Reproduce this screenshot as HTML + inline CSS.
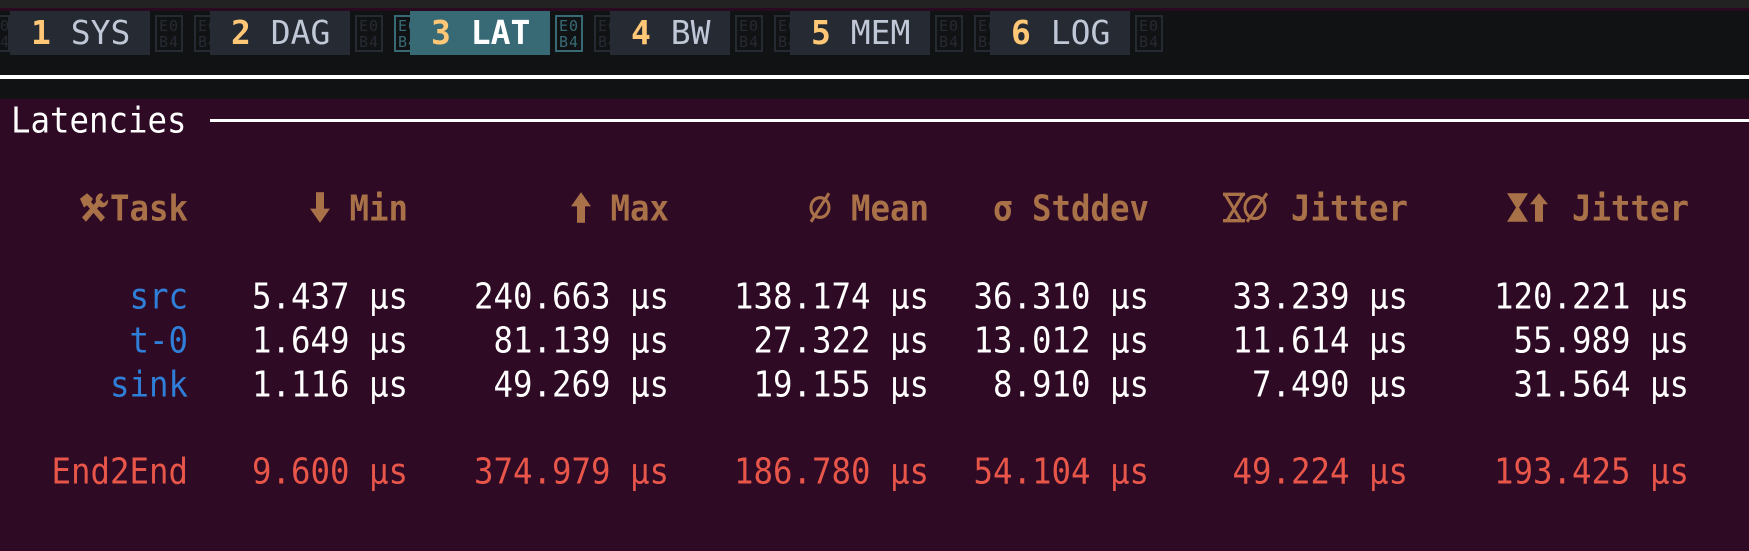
<!DOCTYPE html>
<html><head><meta charset="utf-8"><style>
*{margin:0;padding:0;box-sizing:border-box}
body{width:1749px;height:551px;overflow:hidden;background:#2e0a24;position:relative;font-family:"DejaVu Sans Mono","Liberation Mono",monospace}
.abs{position:absolute}
.tabs{top:0;left:0;width:1749px;height:99px;background:#111214}
.topbar{top:0;left:0;width:1749px;height:8px;background:#222222}
.pl{top:8px;left:0;width:1749px;height:3px;background:#2a0a20}
.tab{position:absolute;top:11px;height:44px;background:#262a33;color:#c0c8d8;font-size:33px;line-height:44px;white-space:pre;padding-left:21px}
.tab b{color:#ffc776}
.tab.act{background:#386a75;color:#fff;font-weight:bold}
.box{position:absolute;top:15px;width:28px;height:37px;border:2px solid #262a33;color:#262a33;font-size:15px;line-height:16px;padding-left:2px;padding-top:1px;letter-spacing:1px;overflow:hidden;white-space:pre}
.box.t{border-color:#386a75;color:#386a75}
.row{position:absolute;left:0;width:1749px;height:40px;font-size:32.4px;line-height:1;transform:scaleY(1.1);transform-origin:top;white-space:pre}
.c{position:absolute;top:0}
.h{color:#a87148;font-weight:bold}
.w{color:#ffffff}.bl{color:#2f7fd8}.r{color:#e8564a}
svg{vertical-align:-2px}
</style></head><body>
<div class="abs tabs"></div>
<div class="abs topbar"></div>
<div class="abs pl"></div>
<div class="abs" style="top:75px;left:0;width:1749px;height:4px;background:#fff"></div>

<div class="box" style="left:-14px;width:24px">E0<br>B4</div>
<div class="tab" style="left:10px;width:140px"><b>1</b> SYS</div>
<div class="box" style="left:155px">E0<br>B4</div>
<div class="box" style="left:194px;width:20px">E0<br>B4</div>
<div class="tab" style="left:210px;width:140px"><b>2</b> DAG</div>
<div class="box" style="left:355px">E0<br>B4</div>
<div class="box t" style="left:394px;width:20px">E0<br>B4</div>
<div class="tab act" style="left:410px;width:140px"><b>3</b> LAT</div>
<div class="box t" style="left:555px">E0<br>B4</div>
<div class="box" style="left:594px;width:20px">E0<br>B4</div>
<div class="tab" style="left:610px;width:120px"><b>4</b> BW</div>
<div class="box" style="left:735px">E0<br>B4</div>
<div class="box" style="left:774px;width:20px">E0<br>B4</div>
<div class="tab" style="left:790px;width:140px"><b>5</b> MEM</div>
<div class="box" style="left:935px">E0<br>B4</div>
<div class="box" style="left:974px;width:20px">E0<br>B4</div>
<div class="tab" style="left:990px;width:140px"><b>6</b> LOG</div>
<div class="box" style="left:1135px">E0<br>B4</div>

<div class="row w" style="top:103px"><span class="c" style="left:11px">Latencies</span></div>
<div class="abs" style="top:119px;left:210px;width:1539px;height:3px;background:#fff"></div>

<div class="row h" style="top:191px">
<span class="c" style="right:1561px"><svg width="32" height="28" viewBox="0 0 32 28"><g fill="#a87148"><path d="M2 6 L9 1 L15 6 L13 9 L27 23 L23 27 L9 12 L6 14 Z"/><path d="M24 1 a6 6 0 0 0 -6 8 L4 23 L8 27 L21 13 a6 6 0 0 0 9 -6 L26 10 L22 7 L25 3 Z"/></g></svg>Task</span>
<span class="c" style="right:1341px"><svg width="20" height="28" viewBox="0 0 20 28"><path fill="#a87148" d="M6 0 H14 V15 H20 L10 28 L0 15 H6 Z"/></svg> Min</span>
<span class="c" style="right:1080px"><svg width="20" height="28" viewBox="0 0 20 28"><path fill="#a87148" d="M6 28 H14 V13 H20 L10 0 L0 13 H6 Z"/></svg> Max</span>
<span class="c" style="right:820px"><svg width="22" height="28" viewBox="0 0 22 28"><g fill="none" stroke="#a87148" stroke-width="3"><circle cx="11" cy="14" r="9"/><path d="M2 27 L20 1"/></g></svg> Mean</span>
<span class="c" style="right:600px">σ Stddev</span>
<span class="c" style="right:341px"><svg width="50" height="28" viewBox="0 0 50 28"><g fill="none" stroke="#a87148" stroke-width="3"><path d="M2 2 H24 M2 26 H24 M4 2 L20 26 M22 2 L6 26"/><circle cx="34" cy="14" r="10"/><path d="M26 27 L46 1"/></g></svg> Jitter</span>
<span class="c" style="right:60px"><svg width="46" height="28" viewBox="0 0 46 28"><g fill="#a87148"><path d="M1 1 H22 L13 14 L22 27 H1 L10 14 Z"/><path d="M33 1 L42 11 H37 V27 H29 V11 H24 Z"/></g></svg> Jitter</span>
</div>

<div class="row w" style="top:279px"><span class="c bl" style="right:1561px">src</span><span class="c" style="right:1341px">5.437 μs</span><span class="c" style="right:1080px">240.663 μs</span><span class="c" style="right:820px">138.174 μs</span><span class="c" style="right:600px">36.310 μs</span><span class="c" style="right:341px">33.239 μs</span><span class="c" style="right:60px">120.221 μs</span></div>
<div class="row w" style="top:323px"><span class="c bl" style="right:1561px">t-0</span><span class="c" style="right:1341px">1.649 μs</span><span class="c" style="right:1080px">81.139 μs</span><span class="c" style="right:820px">27.322 μs</span><span class="c" style="right:600px">13.012 μs</span><span class="c" style="right:341px">11.614 μs</span><span class="c" style="right:60px">55.989 μs</span></div>
<div class="row w" style="top:367px"><span class="c bl" style="right:1561px">sink</span><span class="c" style="right:1341px">1.116 μs</span><span class="c" style="right:1080px">49.269 μs</span><span class="c" style="right:820px">19.155 μs</span><span class="c" style="right:600px">8.910 μs</span><span class="c" style="right:341px">7.490 μs</span><span class="c" style="right:60px">31.564 μs</span></div>
<div class="row r" style="top:454px"><span class="c" style="right:1561px">End2End</span><span class="c" style="right:1341px">9.600 μs</span><span class="c" style="right:1080px">374.979 μs</span><span class="c" style="right:820px">186.780 μs</span><span class="c" style="right:600px">54.104 μs</span><span class="c" style="right:341px">49.224 μs</span><span class="c" style="right:60px">193.425 μs</span></div>
</body></html>
